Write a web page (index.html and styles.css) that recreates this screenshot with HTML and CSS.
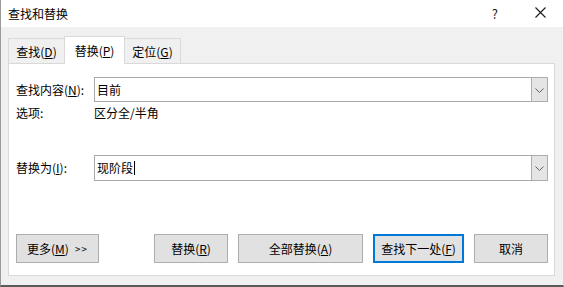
FILE: index.html
```html
<!DOCTYPE html>
<html lang="zh-CN">
<head>
<meta charset="utf-8">
<title>查找和替换</title>
<link rel="stylesheet" href="styles.css">
</head>
<body>
<div class="window">
  <div class="titlebar">
    <span class="title">查找和替换</span>
    <span class="help">?</span>
    <span class="close">
      <svg width="11" height="11" viewBox="0 0 11 11"><path d="M0.5 0.5 L10.5 10.5 M10.5 0.5 L0.5 10.5" stroke="#1a1a1a" stroke-width="1.1" fill="none"/></svg>
    </span>
  </div>
  <div class="client">
    <div class="tabs">
      <div class="tab t1">查找(<u>D</u>)</div>
      <div class="tab t2 active">替换(<u>P</u>)</div>
      <div class="tab t3">定位(<u>G</u>)</div>
    </div>
    <div class="panel">
      <div class="row find-row">
        <label class="label">查找内容(<u>N</u>):</label>
        <div class="combo">
          <span class="combo-text">目前</span>
          <span class="drop"><svg width="9" height="5" viewBox="0 0 9 5"><path d="M0.5 0.5 L4.5 4.5 L8.5 0.5" stroke="#606060" stroke-width="1" fill="none"/></svg></span>
        </div>
      </div>
      <div class="row opt-row">
        <span class="label">选项:</span>
        <span class="opt-value">区分全/半角</span>
      </div>
      <div class="row repl-row">
        <label class="label">替换为(<u>I</u>):</label>
        <div class="combo">
          <span class="combo-text">现阶段<span class="caret"></span></span>
          <span class="drop"><svg width="9" height="5" viewBox="0 0 9 5"><path d="M0.5 0.5 L4.5 4.5 L8.5 0.5" stroke="#606060" stroke-width="1" fill="none"/></svg></span>
        </div>
      </div>
      <div class="buttons">
        <button class="btn more">更多(<u>M</u>) <span class="arrows">&gt;&gt;</span></button>
        <div class="spacer"></div>
        <button class="btn w74">替换(<u>R</u>)</button>
        <button class="btn w125">全部替换(<u>A</u>)</button>
        <button class="btn w91 default">查找下一处(<u>F</u>)</button>
        <button class="btn w74">取消</button>
      </div>
    </div>
  </div>
</div>
</body>
</html>
```

FILE: styles.css
```css
* { box-sizing: border-box; }
html, body { margin: 0; padding: 0; }
body {
  width: 564px;
  height: 287px;
  overflow: hidden;
  font-family: "Noto Sans CJK SC", "Microsoft YaHei", sans-serif;
  font-size: 12px;
  color: #000;
  background: #f0f0f0;
}
u { text-decoration: underline; text-underline-offset: 1px; }
.window {
  width: 564px;
  height: 287px;
  border-left: 1px solid #9a9a9a;
  border-right: 1px solid #d4d4d4;
  border-bottom: 2px solid #5a5a5a;
  display: flex;
  flex-direction: column;
}
.titlebar {
  height: 27px;
  background: #fff;
  display: flex;
  align-items: center;
  padding-left: 7px;
  flex: none;
}
.title { font-size: 12px; line-height: 16px; }
.help { margin-left: auto; font-size: 13px; line-height: 16px; color: #1a1a1a; margin-right: 37px; }
.close { display: flex; margin-right: 17px; margin-top: -2px; }
.client {
  flex: 1;
  padding: 9px 7px 0 7px;
  display: flex;
  flex-direction: column;
}
.tabs {
  display: flex;
  align-items: flex-end;
  margin-bottom: -1px;
  height: 28px;
}
.tab {
  height: 26px;
  border: 1px solid #d9d9d9;
  border-bottom-color: #d9d9d9;
  background: #f0f0f0;
  display: flex;
  align-items: center;
  justify-content: center;
  line-height: 16px;
  padding-top: 1px;
}
.t1 { width: 56px; border-right: none; }
.t2 { width: 61px; }
.t3 { width: 56px; border-left: none; }
.tab.active {
  height: 28px;
  background: #fff;
  border-bottom: none;
  position: relative;
  z-index: 1;
  padding-bottom: 1px;
}
.panel {
  width: 547px;
  height: 213px;
  background: #fff;
  border: 1px solid #d9d9d9;
  padding: 13px 6px 0 7px;
  display: flex;
  flex-direction: column;
}
.row { display: flex; align-items: center; }
.label { width: 78px; flex: none; line-height: 16px; }
.combo {
  flex: 1;
  height: 25px;
  border: 1px solid #a9a9a9;
  display: flex;
  align-items: stretch;
}
.combo-text {
  flex: 1;
  padding-left: 2px;
  display: flex;
  align-items: center;
  line-height: 16px;
}
.caret {
  display: inline-block;
  width: 1px;
  height: 14px;
  background: #000;
  margin-left: 1px;
}
.drop {
  width: 17px;
  margin: -1px -1px -1px 0;
  background: #e5e5e5;
  border: 1px solid #adadad;
  display: flex;
  align-items: center;
  justify-content: center;
  padding-top: 1px;
}
.opt-row { height: 22px; }
.opt-value { line-height: 16px; }
.repl-row { margin-top: 31px; }
.repl-row .combo { height: 26px; }
.buttons {
  display: flex;
  margin-top: 53px;
  gap: 10px;
  padding-right: 0;
}
.spacer { flex: 1; }
.btn {
  height: 29px;
  font-family: inherit;
  font-size: 12px;
  line-height: 16px;
  color: #000;
  background: #e1e1e1;
  border: 1px solid #adadad;
  padding: 0;
  margin: 0;
  display: flex;
  align-items: center;
  justify-content: center;
}
.more { width: 83px; }
.arrows { margin-left: 6px; font-size: 10px; letter-spacing: 1px; }
.w74 { width: 74px; }
.w125 { width: 125px; }
.w91 { width: 91px; }
.default { border: 2px solid #0078d7; }
```
